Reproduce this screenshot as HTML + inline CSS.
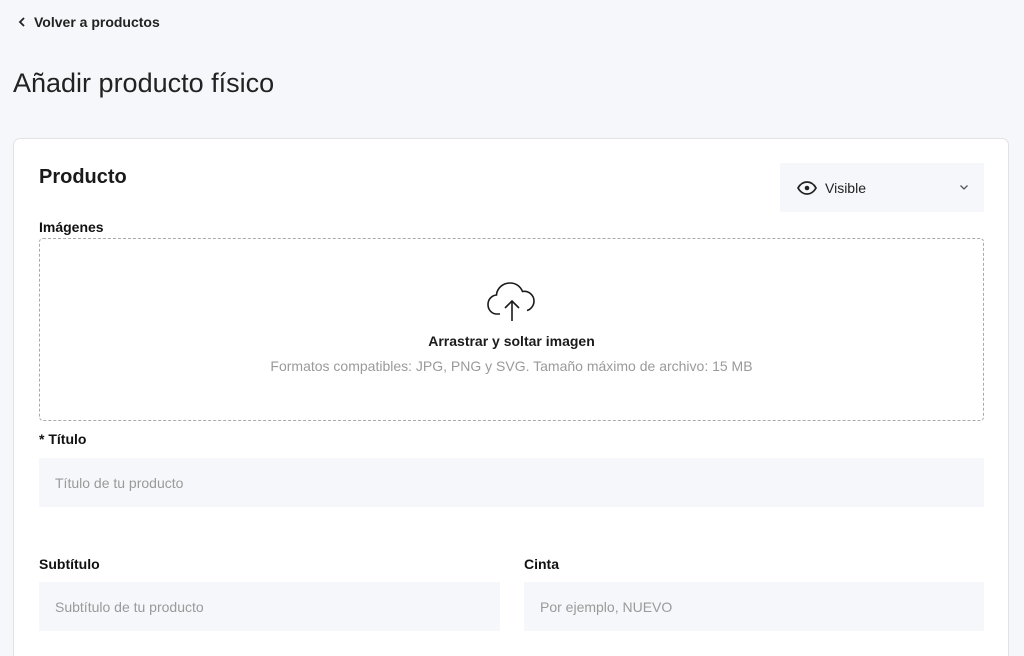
<!DOCTYPE html>
<html><head><meta charset="utf-8"><style>
*{box-sizing:border-box;margin:0;padding:0}
html{overflow:hidden;height:656px}
body{width:1024px;height:656px;overflow:hidden;background:#f6f7fa;font-family:"Liberation Sans",Arial,sans-serif;color:#1a1a1a;position:relative}
.abs{position:absolute}
.back{left:18px;top:14px;font-size:14px;font-weight:600;color:#222;display:flex;align-items:center;gap:7px}
h1{position:absolute;left:13px;top:68px;font-size:27px;font-weight:400;color:#222}
.card{left:13px;top:138px;width:996px;height:518px;background:#fff;border:1px solid #e2e2e4;border-bottom:none;border-radius:7px 7px 0 0}
.lbl{font-size:14px;font-weight:700;color:#111}
.inp{background:#f6f7fa;font-size:14px;color:#9a9a9a;padding-left:16px;display:flex;align-items:center;height:49px}
</style></head><body>
<div class="abs back"><svg width="9" height="12" viewBox="0 0 9 12"><path d="M6 2L2 6l4 4" fill="none" stroke="#222" stroke-width="1.8"/></svg>Volver a productos</div>
<h1>Añadir producto físico</h1>
<div class="abs card"></div>
<div class="abs" style="left:39px;top:166px;font-size:20px;font-weight:700">Producto</div>
<div class="abs" style="left:780px;top:163px;width:204px;height:49px;background:#f6f7fa;display:flex;align-items:center;padding-left:17px;font-size:14px;color:#222">
<svg width="20" height="14" viewBox="0 0 20 14" style="margin-right:8px"><path d="M1 7C3.5 2.5 6.5 1 10 1s6.5 1.5 9 6c-2.5 4.5-5.5 6-9 6S3.5 11.5 1 7z" fill="none" stroke="#222" stroke-width="1.8"/><circle cx="10" cy="7" r="2.3" fill="#222"/></svg>Visible
<svg class="abs" style="left:179px;top:21px" width="10" height="7" viewBox="0 0 10 7"><path d="M1.5 1.5L5 5l3.5-3.5" fill="none" stroke="#555" stroke-width="1.3"/></svg></div>
<div class="abs lbl" style="left:39px;top:219px">Imágenes</div>
<div class="abs" style="left:39px;top:238px;width:945px;height:183px;border:1px dashed #aaa;border-radius:4px"></div>
<svg class="abs" style="left:486px;top:281px" width="52" height="42" viewBox="0 0 52 42"><path d="M14 33H11C5.5 33 2 28.5 2 23.5c0-5 3.5-9 8.5-9.5C11 7 17 2 24 2c6 0 10.5 3.5 12.5 8.5 6-1 11.5 3.5 11.5 9.5 0 5-3.5 8.5-7 9.5" fill="none" stroke="#1a1a1a" stroke-width="1.6"/><path d="M26 40V20M19 27l7-7 7 7" fill="none" stroke="#1a1a1a" stroke-width="1.6"/></svg>
<div class="abs" style="left:39px;top:333px;width:945px;text-align:center;font-size:14px;font-weight:700">Arrastrar y soltar imagen</div>
<div class="abs" style="left:39px;top:358px;width:945px;text-align:center;font-size:14px;color:#9a9a9a">Formatos compatibles: JPG, PNG y SVG. Tamaño máximo de archivo: 15 MB</div>
<div class="abs lbl" style="left:39px;top:431px">* Título</div>
<div class="abs inp" style="left:39px;top:458px;width:945px">Título de tu producto</div>
<div class="abs lbl" style="left:39px;top:556px">Subtítulo</div>
<div class="abs inp" style="left:39px;top:582px;width:461px">Subtítulo de tu producto</div>
<div class="abs lbl" style="left:524px;top:556px">Cinta</div>
<div class="abs inp" style="left:524px;top:582px;width:460px">Por ejemplo, NUEVO</div>
</body></html>
